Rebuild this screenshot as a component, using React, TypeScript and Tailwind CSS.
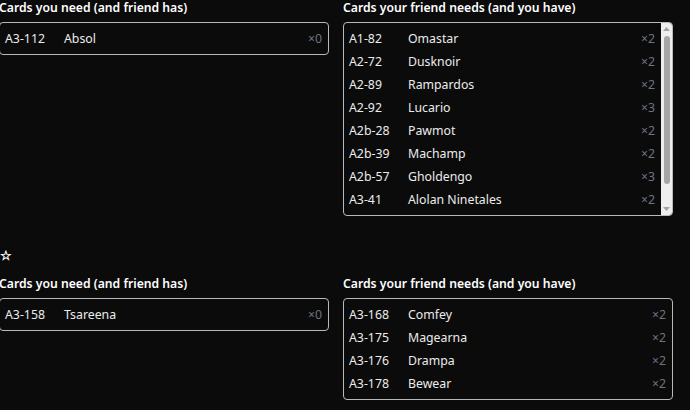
import React from "react";

type Card = { code: string; name: string; count: number };

const need1: Card[] = [{ code: "A3-112", name: "Absol", count: 0 }];
const give1: Card[] = [
  { code: "A1-82", name: "Omastar", count: 2 },
  { code: "A2-72", name: "Dusknoir", count: 2 },
  { code: "A2-89", name: "Rampardos", count: 2 },
  { code: "A2-92", name: "Lucario", count: 3 },
  { code: "A2b-28", name: "Pawmot", count: 2 },
  { code: "A2b-39", name: "Machamp", count: 2 },
  { code: "A2b-57", name: "Gholdengo", count: 3 },
  { code: "A3-41", name: "Alolan Ninetales", count: 2 },
];
const need2: Card[] = [{ code: "A3-158", name: "Tsareena", count: 0 }];
const give2: Card[] = [
  { code: "A3-168", name: "Comfey", count: 2 },
  { code: "A3-175", name: "Magearna", count: 2 },
  { code: "A3-176", name: "Drampa", count: 2 },
  { code: "A3-178", name: "Bewear", count: 2 },
];

function Rows({ cards }: { cards: Card[] }) {
  return (
    <div className="flex-1 pt-[5px] pb-[3px] pl-[5px] pr-[6px]">
      {cards.map((c) => (
        <div key={c.code} className="flex items-center h-[23px] text-[12.3px]">
          <span className="w-[59px] text-[#ececec]">{c.code}</span>
          <span className="flex-1 text-[#ececec]">{c.name}</span>
          <span className="text-[#6d7480]">×{c.count}</span>
        </div>
      ))}
    </div>
  );
}

function Scrollbar() {
  return (
    <div className="w-[11px] bg-[#eeeeee] flex flex-col items-center rounded-tr-[3px] rounded-br-[3px]">
      <svg width="11" height="13" viewBox="0 0 11 13" className="shrink-0">
        <path d="M2 8 L5.5 4 L9 8 Z" fill="#a3a3a3" />
      </svg>
      <div className="w-[6px] h-[148px] bg-[#a6a6a6] rounded-[3px]" />
      <div className="flex-1" />
      <svg width="11" height="13" viewBox="0 0 11 13" className="shrink-0">
        <path d="M2 5 L5.5 9 L9 5 Z" fill="#a3a3a3" />
      </svg>
    </div>
  );
}

function Box({ cards, scroll }: { cards: Card[]; scroll?: boolean }) {
  return (
    <div className="border border-[#b9b9b9] rounded-[4px] flex">
      <Rows cards={cards} />
      {scroll && <Scrollbar />}
    </div>
  );
}

function Heading({ children }: { children: React.ReactNode }) {
  return (
    <div className="h-[15px] leading-[15px] text-[12.2px] font-semibold text-white mb-[7px] whitespace-nowrap">
      {children}
    </div>
  );
}

function Section({ need, give, scroll }: { need: Card[]; give: Card[]; scroll?: boolean }) {
  return (
    <div className="grid grid-cols-[330px_330px] gap-x-[14px] items-start">
      <div>
        <Heading>Cards you need (and friend has)</Heading>
        <Box cards={need} />
      </div>
      <div>
        <Heading>Cards your friend needs (and you have)</Heading>
        <Box cards={give} scroll={scroll} />
      </div>
    </div>
  );
}

export default function App() {
  return (
    <div
      className="w-[690px] h-[410px] overflow-hidden bg-[#0b0b0b] text-white"
      style={{ fontFamily: '"Noto Sans", "Open Sans", sans-serif' }}
    >
      <div className="-ml-[1px]">
        <Section need={need1} give={give1} scroll />
        <div className="mt-[31px] h-[16px] leading-[16px] text-[13px] font-bold text-white ml-[1px]">☆</div>
        <div className="mt-[13px]">
          <Section need={need2} give={give2} />
        </div>
      </div>
    </div>
  );
}
